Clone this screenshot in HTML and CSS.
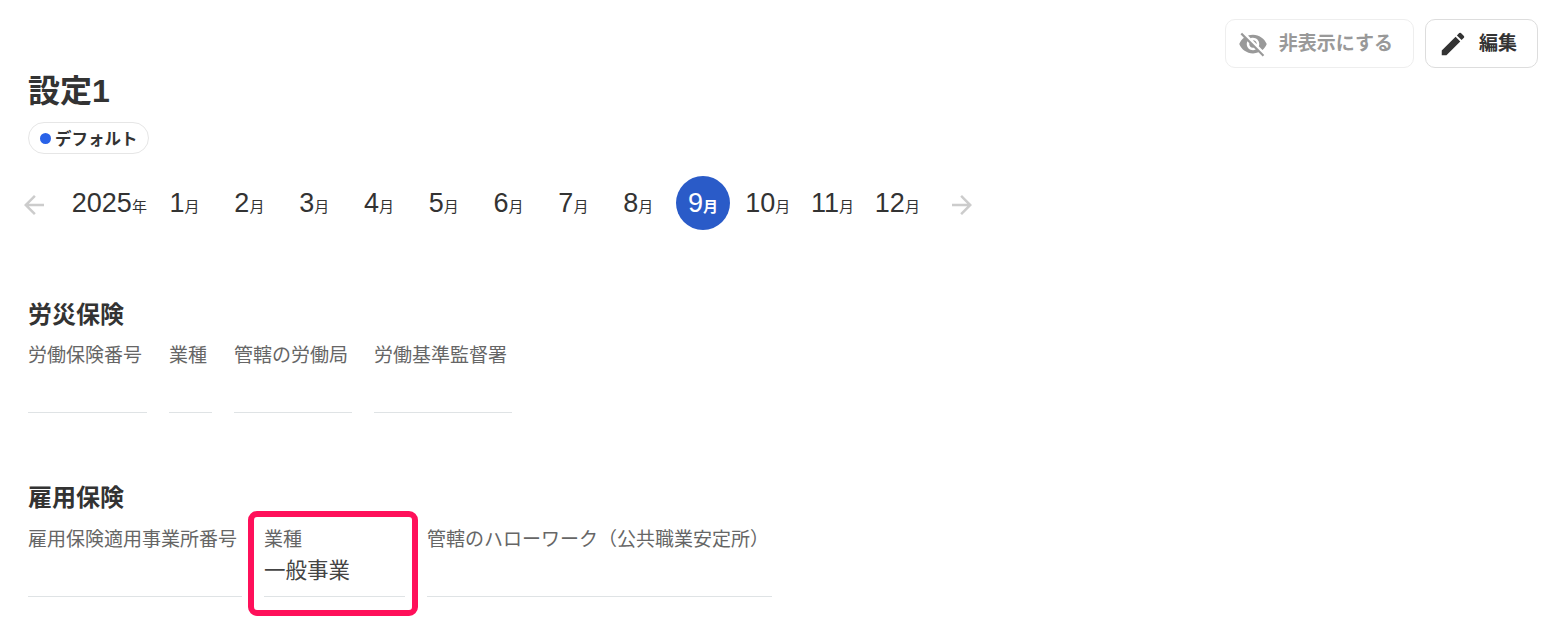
FILE: index.html
```html
<!DOCTYPE html>
<html lang="ja">
<head>
  <meta charset="UTF-8"/>
  <title>設定1</title>
  <link rel="stylesheet" href="styles.css">
</head>
<body>
  <div class="actions">
    <button class="btn btn-muted">
      <svg viewBox="0 0 24 24" width="30" height="30"><path fill="#999" d="M12 7c2.76 0 5 2.24 5 5 0 .65-.13 1.26-.36 1.83l2.92 2.92c1.51-1.26 2.7-2.89 3.43-4.75-1.73-4.39-6-7.5-11-7.5-1.4 0-2.74.25-3.98.7l2.16 2.16C10.74 7.13 11.35 7 12 7zM2 4.27l2.28 2.28.46.46C3.08 8.3 1.78 10.02 1 12c1.73 4.39 6 7.5 11 7.5 1.55 0 3.03-.3 4.38-.84l.42.42L19.73 22 21 20.73 3.27 3 2 4.27zM7.53 9.8l1.55 1.55c-.05.21-.08.43-.08.65 0 1.66 1.34 3 3 3 .22 0 .44-.03.65-.08l1.55 1.55c-.67.33-1.41.53-2.2.53-2.76 0-5-2.24-5-5 0-.79.2-1.53.53-2.2zm4.31-.78l3.15 3.15.02-.16c0-1.66-1.34-3-3-3l-.17.01z"/></svg>
      <span class="btn-label">非表示にする</span>
    </button>
    <button class="btn">
      <svg viewBox="0 0 24 24" width="30" height="30"><path fill="#333" d="M3 17.25V21h3.75L17.81 9.94l-3.75-3.75L3 17.25zM20.71 7.04a1 1 0 0 0 0-1.41l-2.34-2.34a1 1 0 0 0-1.41 0l-1.83 1.83 3.75 3.75 1.83-1.83z"/></svg>
      <span class="btn-label">編集</span>
    </button>
  </div>

  <h1>設定1</h1>
  <span class="badge"><i class="dot"></i>デフォルト</span>

  <div class="months">
    <svg class="arrow" viewBox="0 0 24 24" width="30" height="30"><path fill="#ccc" d="M20 11H7.83l5.59-5.59L12 4l-8 8 8 8 1.41-1.41L7.83 13H20z"/></svg>
    <span class="year">2025<small>年</small></span>
    <span class="month">1<small>月</small></span>
    <span class="month">2<small>月</small></span>
    <span class="month">3<small>月</small></span>
    <span class="month">4<small>月</small></span>
    <span class="month">5<small>月</small></span>
    <span class="month">6<small>月</small></span>
    <span class="month">7<small>月</small></span>
    <span class="month">8<small>月</small></span>
    <span class="month active">9<small>月</small></span>
    <span class="month">10<small>月</small></span>
    <span class="month">11<small>月</small></span>
    <span class="month">12<small>月</small></span>
    <svg class="arrow arrow-next" viewBox="0 0 24 24" width="30" height="30"><path fill="#ccc" d="M4 11h12.17l-5.59-5.59L12 4l8 8-8 8-1.41-1.41L16.17 13H4z"/></svg>
  </div>

  <section class="section first">
    <h2>労災保険</h2>
    <div class="fields">
      <div class="field w119"><label>労働保険番号</label><p></p></div>
      <div class="field w43"><label>業種</label><p></p></div>
      <div class="field w118"><label>管轄の労働局</label><p></p></div>
      <div class="field w138"><label>労働基準監督署</label><p></p></div>
    </div>
  </section>

  <section class="section second">
    <h2>雇用保険</h2>
    <div class="fields">
      <div class="field w214"><label>雇用保険適用事業所番号</label><p></p></div>
      <div class="field w141 marked"><label>業種</label><p>一般事業</p></div>
      <div class="field w345"><label>管轄のハローワーク（公共職業安定所）</label><p></p></div>
    </div>
  </section>
</body>
</html>
```

FILE: styles.css
```css
body {
  margin: 0;
  padding: 19px 18px 40px 28px;
  background: #fff;
  color: #333;
  font-family: "Liberation Sans", "Noto Sans CJK JP", sans-serif;
}
/* TOP BUTTONS */
.actions {
  display: flex;
  justify-content: flex-end;
  gap: 11px;
  height: 49px;
}
.btn {
  display: flex;
  align-items: center;
  gap: 11px;
  height: 49px;
  padding: 0 20px 0 12px;
  border: 1px solid #ddd;
  border-radius: 10px;
  background: #fff;
  color: #333;
  font-family: inherit;
  font-size: 19px;
  font-weight: 700;
}
.btn-label {
  padding-bottom: 5px;
}
.btn-muted {
  border-color: #eee;
  color: #999;
}
/* HEADING + BADGE */
h1 {
  margin: 3px 0 0;
  font-size: 32px;
  line-height: 40px;
}
.badge {
  display: inline-flex;
  align-items: center;
  gap: 4px;
  height: 32px;
  margin-top: 11px;
  padding: 0 10.5px 0 11px;
  box-sizing: border-box;
  border: 1px solid #e6e6e6;
  border-radius: 16px;
  font-size: 16.5px;
  font-weight: 700;
}
.dot {
  width: 11px;
  height: 11px;
  border-radius: 50%;
  background: #2962e8;
}
/* MONTH PICKER */
.months {
  display: flex;
  align-items: center;
  gap: 10.8px;
  margin: 22px 0 0 -9px;
  height: 54px;
}
.arrow {
  flex: none;
  margin-top: 3px;
}
.arrow-next {
  margin-left: 12px;
}
.year {
  width: 75px;
  margin: 0 0 0 12px;
  font-size: 27px;
  white-space: nowrap;
}
.month {
  width: 54px;
  height: 54px;
  border-radius: 50%;
  font-size: 27px;
  line-height: 54px;
  text-align: center;
}
.months small {
  font-size: 15px;
}
.month.active {
  background: #2a5bc8;
  color: #fff;
}
.month.active small {
  font-weight: 700;
}
/* SECTIONS */
.section.first {
  margin-top: 69px;
}
.section.second {
  margin-top: 69px;
}
.second .fields {
  margin-top: 12px;
}
h2 {
  margin: 0;
  font-size: 24px;
  line-height: 32px;
}
.fields {
  display: flex;
  gap: 22px;
  margin-top: 11px;
}
.field {
  position: relative;
  height: 70px;
  border-bottom: 1px solid #dfe3e5;
}
.field label {
  display: block;
  color: #666;
  font-size: 19px;
  line-height: 28px;
  white-space: nowrap;
}
.field p {
  margin: 3px 0 0;
  font-size: 21.5px;
  line-height: 28px;
  color: #444;
}
.w43 { width: 43px; }
.w118 { width: 118px; }
.w119 { width: 119px; }
.w138 { width: 138px; }
.w141 { width: 141px; }
.w214 { width: 214px; }
.w345 { width: 345px; }
/* PINK HIGHLIGHT */
.marked::after {
  content: "";
  position: absolute;
  left: -16px;
  right: -13px;
  top: -15px;
  bottom: -20px;
  border: 6px solid #ff105a;
  border-radius: 9px;
}
```
